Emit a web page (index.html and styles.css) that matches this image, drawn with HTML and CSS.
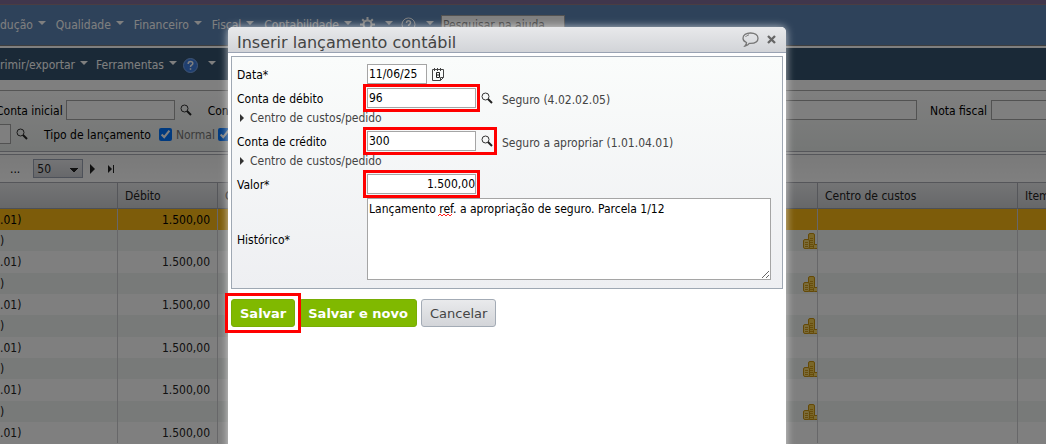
FILE: index.html
```html
<!DOCTYPE html>
<html lang="pt-BR">
<head>
  <meta charset="UTF-8" />
  <title>Inserir lançamento contábil</title>
  <link rel="stylesheet" href="styles.css">
</head>
<body>
  <svg class="symbols" aria-hidden="true">
    <symbol id="lupa" viewBox="0 0 12 12">
      <circle cx="4.500" cy="4.500" r="3.500" fill="none" stroke="#333" />
      <path d="M7 7l4 4" stroke="#222" stroke-width="2" />
    </symbol>
    <symbol id="moedas" viewBox="0 0 14 16">
      <rect x="5.500" y=".5" width="6" height="15" rx="1.500" fill="#f5cf50" stroke="#c9930f" />
      <rect x=".5" y="6.500" width="6" height="9" rx="1.500" fill="#f4d673" stroke="#c9930f" />
      <rect x="10.500" y="11.500" width="6" height="4" rx="1" fill="#f5d66a" stroke="#c9930f" />
      <path d="M7 5.500h3M7 7.500h3M7 9.500h3M7 11.500h3M7 13.500h3M2 9.500h3M2 11.500h3M2 13.500h3" stroke="#d09a18" />
    </symbol>
  </svg>

  <div class="page">
    <div class="topline"></div>
    <nav class="menu">
      <a href="#" class="drop">dução</a>
      <a href="#" class="drop">Qualidade</a>
      <a href="#" class="drop">Financeiro</a>
      <a href="#" class="drop">Fiscal</a>
      <a href="#" class="drop">Contabilidade</a>
      <a href="#" class="drop icon-drop" aria-label="Configurações">
        <svg width="15" height="15" viewBox="0 0 15 15" fill="none" stroke="#fff">
          <circle cx="7.500" cy="7.500" r="4" stroke-width="2" />
          <path d="M7.500 0v3M7.500 12v3M0 7.500h3M12 7.500h3M2.200 2.200l2 2M10.800 10.800l2 2M2.200 12.800l2-2M10.800 4.200l2-2" stroke-width="2" />
        </svg>
      </a>
      <a href="#" class="drop icon-drop" aria-label="Ajuda">
        <svg width="15" height="15" viewBox="0 0 15 15" fill="none" stroke="#fff">
          <circle cx="7.500" cy="7.500" r="6.500" />
          <path d="M5.500 6q0-2.200 2-2.200t2 1.900q0 1-1 1.600t-1 1.700M7.500 10v1.500" stroke-width="1.500" />
        </svg>
      </a>
      <input type="text" class="search" placeholder="Pesquisar na ajuda..." aria-label="Pesquisar na ajuda">
    </nav>

    <div class="toolbar">
      <a href="#" class="drop">rimir/exportar</a>
      <a href="#" class="drop">Ferramentas</a>
      <a href="#" class="drop icon-drop" aria-label="Ajuda da tela">
        <svg width="15" height="15" viewBox="0 0 15 15">
          <circle cx="7.500" cy="7.500" r="7" fill="#3f7fe0" stroke="#7fa8e8" />
          <path d="M5.200 6q0-2.500 2.300-2.500t2.300 2q0 1-1.200 1.700t-1.100 1.800M7.500 10.200v1.600" fill="none" stroke="#fff" stroke-width="1.500" />
        </svg>
      </a>
    </div>

    <div class="filters">
      <div class="filter-row">
        <label for="conta-inicial" class="cut">Conta inicial</label>
        <input type="text" id="conta-inicial" class="field account">
        <svg class="lupa"><use href="#lupa" /></svg>
        <label for="conta-final" class="next">Con</label>
        <input type="text" id="conta-final" class="field grow">
        <label for="nota" class="nota">Nota fiscal</label>
        <input type="text" id="nota" class="field nota-field">
      </div>
      <div class="filter-row">
        <input type="text" class="field tail" aria-label="Pessoa">
        <svg class="lupa"><use href="#lupa" /></svg>
        <span class="next">Tipo de lançamento</span>
        <input type="checkbox" id="normal" class="tick" checked>
        <label for="normal" class="tick-label">Normal</label>
        <input type="checkbox" class="tick" aria-label="Encerramento" checked>
      </div>
    </div>

    <div class="pager">
      <span class="dots">...</span>
      <select class="page-size" aria-label="Linhas por página"><option>50</option></select>
      <svg class="arrow" width="5" height="10" viewBox="0 0 5 10"><path d="M0 0l5 5-5 5z" /></svg>
      <svg class="arrow" width="7" height="10" viewBox="0 0 7 10"><path d="M0 1l4 4-4 4zM5 1h1v8h-1z" /></svg>
    </div>

    <table class="grid">
      <colgroup>
        <col class="c-conta"><col class="c-valor"><col class="c-valor"><col><col class="c-custo"><col class="c-item">
      </colgroup>
      <thead>
        <tr><th></th><th>Débito</th><th>C</th><th></th><th>Centro de custos</th><th class="item">Item</th></tr>
      </thead>
      <tbody>
        <tr class="selected"><td>.01)</td><td class="num">1.500,00</td><td></td><td></td><td></td><td></td></tr>
        <tr><td>)</td><td></td><td></td><td class="coin"><svg><use href="#moedas" /></svg></td><td></td><td></td></tr>
        <tr><td>.01)</td><td class="num">1.500,00</td><td></td><td></td><td></td><td></td></tr>
        <tr><td>)</td><td></td><td></td><td class="coin"><svg><use href="#moedas" /></svg></td><td></td><td></td></tr>
        <tr><td>.01)</td><td class="num">1.500,00</td><td></td><td></td><td></td><td></td></tr>
        <tr><td>)</td><td></td><td></td><td class="coin"><svg><use href="#moedas" /></svg></td><td></td><td></td></tr>
        <tr><td>.01)</td><td class="num">1.500,00</td><td></td><td></td><td></td><td></td></tr>
        <tr><td>)</td><td></td><td></td><td class="coin"><svg><use href="#moedas" /></svg></td><td></td><td></td></tr>
        <tr><td>.01)</td><td class="num">1.500,00</td><td></td><td></td><td></td><td></td></tr>
        <tr><td>)</td><td></td><td></td><td class="coin"><svg><use href="#moedas" /></svg></td><td></td><td></td></tr>
        <tr><td>.01)</td><td class="num">1.500,00</td><td></td><td></td><td></td><td></td></tr>
      </tbody>
    </table>
  </div>

  <div class="overlay"></div>

  <div class="dialog" role="dialog" aria-labelledby="titulo">
    <div class="dialog-head">
      <h1 id="titulo">Inserir lançamento contábil</h1>
      <button class="head-button" aria-label="Comentar">
        <svg width="17" height="15" viewBox="0 0 17 15" fill="none" stroke="#777">
          <path d="M4.500 10.500C2 9.500 1 8 1 6.200 1 3 4.200 1 8.500 1S16 3 16 6.200s-3.200 5.100-7.500 5.100H7.300C6.500 12.600 5.200 13.500 3 14q1.500-1.700 1.500-3.500z" stroke-width="1.300" />
          <path d="M3.500 5q1-1.800 3.500-2.200" />
        </svg>
      </button>
      <button class="head-button" aria-label="Fechar">
        <svg width="9" height="9" viewBox="0 0 9 9"><path d="M1 1l7 7M8 1l-7 7" stroke="#666" stroke-width="2.300" /></svg>
      </button>
    </div>

    <form>
      <div class="panel">
        <div class="row">
          <label for="data">Data*</label>
          <input type="text" id="data" class="field date" value="11/06/25">
          <svg class="calendar" width="12" height="13" viewBox="0 0 12 13" fill="none" stroke="#444">
            <path d="M.5 1.500h11v8l-3 3h-8zM8.500 12.500v-3h3" />
            <path d="M2.500 0v3M5.500 0v3M8.500 0v3" />
            <path d="M4.500 4.500h3v5h-3zM4.500 7h3" stroke="#222" />
          </svg>
        </div>
        <div class="row">
          <label for="debito">Conta de débito</label>
          <input type="text" id="debito" class="field account marked" value="96">
          <svg class="lupa"><use href="#lupa" /></svg>
          <span class="account-name">Seguro (4.02.02.05)</span>
        </div>
        <a href="#" class="expand">Centro de custos/pedido</a>
        <div class="row">
          <label for="credito">Conta de crédito</label>
          <span class="lookup marked">
            <input type="text" id="credito" class="field account" value="300">
            <svg class="lupa"><use href="#lupa" /></svg>
          </span>
          <span class="account-name">Seguro a apropriar (1.01.04.01)</span>
        </div>
        <a href="#" class="expand">Centro de custos/pedido</a>
        <div class="row">
          <label for="valor">Valor*</label>
          <input type="text" id="valor" class="field account amount marked" value="1.500,00">
        </div>
        <div class="row">
          <label for="historico">Histórico*</label>
          <div class="history">
            <textarea id="historico" class="field" spellcheck="false">Lançamento ref. a apropriação de seguro. Parcela 1/12</textarea>
            <svg class="squiggle" width="14" height="4" viewBox="0 0 14 4"><path d="M0 3l2-2 2 2 2-2 2 2 2-2 2 2 2-2" fill="none" stroke="#f22" /></svg>
          </div>
        </div>
      </div>
      <div class="buttons">
        <span class="frame"><button type="button" class="btn primary">Salvar</button></span>
        <button type="button" class="btn primary">Salvar e novo</button>
        <button type="button" class="btn">Cancelar</button>
      </div>
    </form>
  </div>
</body>
</html>
```

FILE: styles.css
```css
* {
  box-sizing: border-box;
}
body {
  margin: 0;
  height: 100vh;
  overflow: hidden;
  position: relative;
  font-family: "DejaVu Sans Condensed", Tahoma, "Noto Sans", sans-serif;
  font-size: 12px;
  line-height: 16px;
  color: #000;
}
input, select, textarea, button {
  font: inherit;
}
svg {
  display: block;
  flex: none;
}
a {
  text-decoration: none;
}
.symbols {
  position: absolute;
  width: 0;
  height: 0;
}
.field {
  height: 20px;
  padding: 0 1px;
  border: 1px solid #a5a5a5;
  background: #fff;
  color: #000;
}
.account {
  width: 109px;
}
.lupa {
  width: 12px;
  height: 12px;
  margin-left: 5px;
}

/* page behind the dialog */
.page {
  background: #fff;
}
.topline {
  height: 5px;
  background: #806c98;
  border-bottom: 1px solid #957b85;
}
.menu, .toolbar {
  display: flex;
  align-items: center;
}
.menu {
  gap: 10px;
  height: 41px;
  padding-bottom: 1px;
  background: #5c84b4;
  border-bottom: 1px solid #7d7d7d;
}
.toolbar {
  gap: 8px;
  height: 34px;
  padding-top: 2px;
  border-top: 2px solid #fff;
  background: #34536f;
}
.drop {
  display: flex;
  align-items: center;
  gap: 5px;
  color: #fff;
}
.drop::after {
  content: "";
  border: 4px solid transparent;
  border-top-color: #fff;
  border-bottom: 0;
  margin-bottom: 4px;
}
.icon-drop {
  gap: 10px;
  margin-left: -2px;
}
.search {
  width: 124px;
  height: 20px;
  margin-left: -3px;
  padding: 0 1px;
  border: 1px solid #a5a5a5;
}
.filters {
  margin-top: 10px;
  padding: 9px 0 7px;
  border-top: 1px solid #aaa;
  border-bottom: 1px solid #aaacb4;
  background: linear-gradient(#fff, #eaeeec);
}
.filter-row {
  display: flex;
  align-items: center;
  height: 20px;
}
.filter-row + .filter-row {
  margin-top: 4px;
}
.filter-row label, .next {
  padding-top: 2px;
  white-space: nowrap;
}
.cut {
  margin: 0 3px 0 -4px;
}
.next {
  margin: 0 8px 0 16px;
}
.grow {
  flex: 1;
}
.nota {
  margin: 0 4px 0 13px;
}
.nota-field {
  width: 55px;
  border-right: 0;
}
.tail {
  width: 11px;
  border-left: 0;
}
.tick {
  width: 13px;
  height: 13px;
  margin: 0 4px 0 0;
  accent-color: #0075ff;
}
.tick-label {
  margin-right: 3px;
  color: #777;
}
.pager {
  display: flex;
  align-items: center;
  gap: 13px;
  height: 29px;
  margin-top: 2px;
  padding-left: 10px;
  border-top: 1px solid #aaacb4;
  border-bottom: 1px solid #aaacb4;
  background: linear-gradient(#f4f4f4, #fff);
}
.page-size {
  width: 50px;
  height: 19px;
  padding: 0 3px;
  appearance: none;
  border: 1px solid #9aa3b3;
  border-radius: 0;
  background:
    conic-gradient(from 315deg at 50% 100%, #222 90deg, transparent 0) 36px 8px / 8px 4px no-repeat,
    linear-gradient(#e8e9ec, #cfd1d6);
  color: #222;
}
.arrow {
  margin-left: -6px;
  fill: #222;
}
.arrow + .arrow {
  margin-left: 0;
}
.grid {
  width: 100%;
  table-layout: fixed;
  border-collapse: separate;
  border-spacing: 0;
}
.c-conta {
  width: 118px;
}
.c-valor {
  width: 100px;
}
.c-custo {
  width: 200px;
}
.c-item {
  width: 28px;
}
.grid th {
  height: 26px;
  padding: 0 7px;
  border-right: 1px solid #aaacb4;
  border-bottom: 1px solid #9aa0ac;
  background: linear-gradient(#e8e9eb, #cdcfd3);
  color: #222;
  font-weight: normal;
  text-align: left;
  overflow: hidden;
}
.grid .item {
  padding-right: 0;
}
.grid td {
  height: 21px;
  padding: 0 7px 0 0;
  border-right: 1px solid #cfcfd2;
  color: #222;
}
.grid th:last-child, .grid td:last-child {
  border-right: 0;
}
.grid tr:nth-child(3n) td {
  height: 22px;
}
.grid tr:nth-child(even) td {
  background: #f0f4f2;
}
.grid .selected td {
  background: #fab814;
  color: #000;
}
.grid .num {
  text-align: right;
}
.grid .coin {
  padding: 0;
}
.coin svg {
  width: 14px;
  height: 16px;
  margin-left: auto;
}
.overlay {
  position: absolute;
  inset: 0;
  background: rgba(0, 0, 0, 0.5);
}

/* dialog */
.dialog {
  position: absolute;
  top: 27px;
  bottom: -20px;
  left: 228px;
  width: 558px;
  border-radius: 5px 5px 0 0;
  background: #fff;
  box-shadow: 0 0 9px rgba(255, 255, 255, 0.7);
}
.dialog-head {
  display: flex;
  align-items: center;
  gap: 8px;
  height: 26px;
  padding: 0 10px 0 9px;
  border-bottom: 1px solid #9aa3b3;
  border-radius: 5px 5px 0 0;
  background: linear-gradient(#e8e9eb, #d2d4d8);
}
.dialog-head h1 {
  flex: 1;
  margin: 6px 0 0;
  font-family: "DejaVu Sans", Verdana, sans-serif;
  font-size: 16px;
  font-weight: normal;
  line-height: 20px;
  color: #444;
}
.head-button {
  padding: 0;
  border: 0;
  background: none;
}
.panel {
  margin: 3px 3px 0;
  padding: 7px 11px 8px 5px;
  border: 1px solid #9fa8b3;
  background: linear-gradient(#fafcfb, #eeeff2);
}
.row {
  display: flex;
  align-items: center;
}
.row + .row {
  margin-top: 4px;
}
.row label {
  flex: none;
  width: 130px;
  padding-top: 2px;
}
.date {
  width: 60px;
}
.calendar {
  margin-left: 5px;
}
.lookup {
  display: flex;
  align-items: center;
}
.account-name {
  margin-left: 9px;
  padding-top: 3px;
  color: #444;
}
.marked {
  outline: 3px solid #f00;
  outline-offset: 1px;
}
.amount {
  padding: 0;
  text-align: right;
}
.expand {
  display: flex;
  align-items: center;
  gap: 6px;
  height: 23px;
  padding: 0 0 4px 3px;
  color: #444;
}
.expand::before {
  content: "";
  border: 4px solid transparent;
  border-left-color: #333;
  border-right: 0;
}
.history {
  position: relative;
  flex: 1;
}
.history textarea {
  display: block;
  width: 100%;
  height: 82px;
  padding: 2px 1px;
}
.squiggle {
  position: absolute;
  top: 15px;
  left: 71px;
}
.buttons {
  display: flex;
  gap: 4px;
  padding: 10px 3px;
}
.btn {
  height: 28px;
  padding: 1px 8px 0;
  border: 1px solid #a3abb5;
  border-radius: 3px;
  background: linear-gradient(#e9eaec, #d3d5d9);
  font-family: "DejaVu Sans", Verdana, sans-serif;
  font-size: 13px;
  color: #444;
}
.primary {
  border-color: #78ad05;
  background: #80b900;
  font-weight: bold;
  color: #fff;
}
.frame {
  position: relative;
  z-index: 1;
  outline: 3px solid #f00;
  outline-offset: 3px;
}
```
